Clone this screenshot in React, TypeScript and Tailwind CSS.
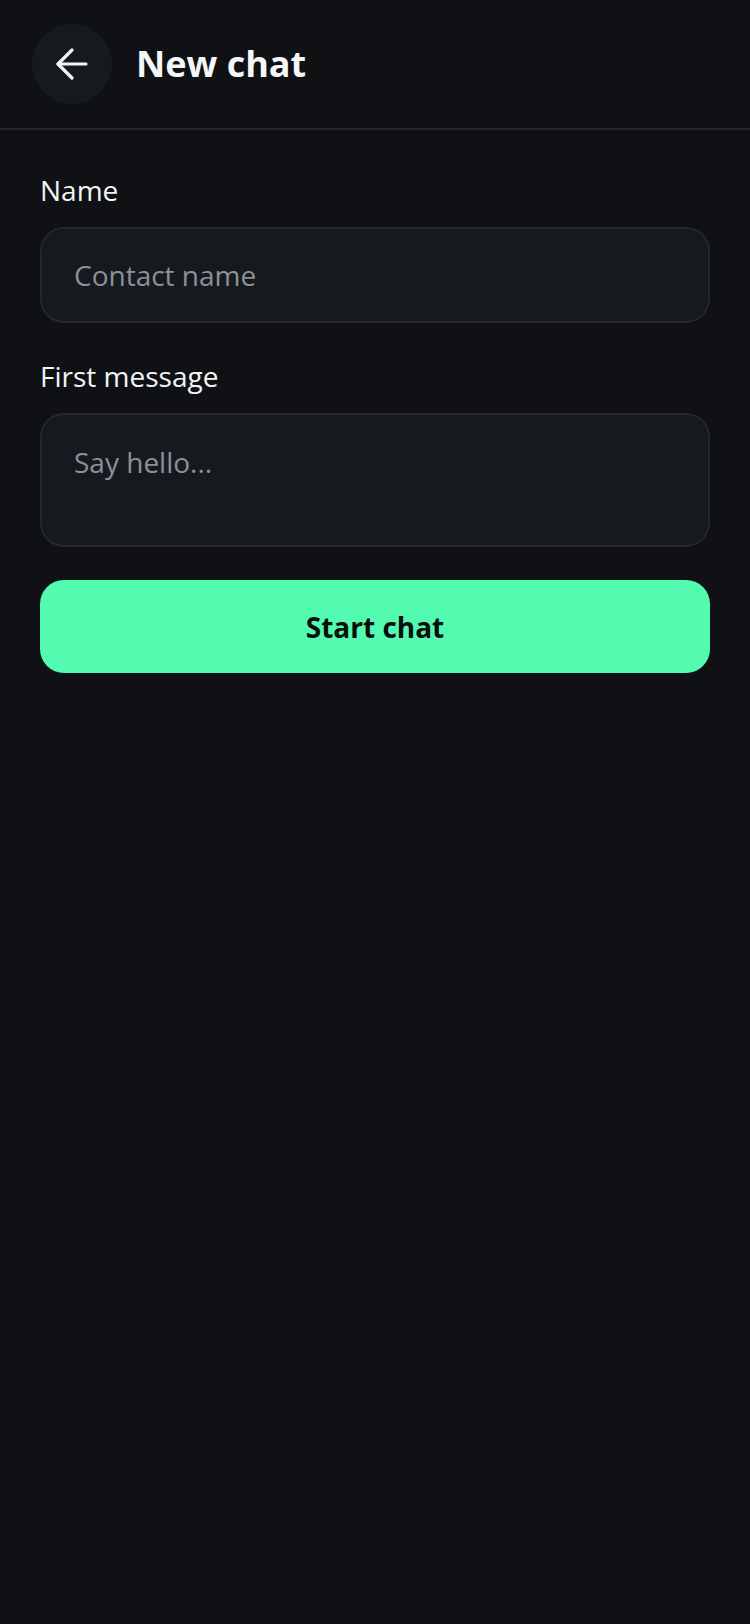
import { ArrowLeft } from "lucide-react";

export default function App() {
  return (
    <div
      className="min-h-[1624px] w-full bg-[#0f1115] text-[#f3f4f6]"
      style={{ fontFamily: '"Open Sans", "Noto Sans", sans-serif' }}
    >
      <header className="flex h-[130px] items-center gap-[24px] border-b-2 border-[#24272c] px-[32px]">
        <button className="flex h-[80px] w-[80px] items-center justify-center rounded-full bg-[#16191e] text-[#f3f4f6]">
          <ArrowLeft size={48} strokeWidth={1.6} />
        </button>
        <h1 className="text-[36px] font-bold leading-none text-[#f5f6f8]">New chat</h1>
      </header>
      <main className="flex flex-col px-[40px] pt-[39px]">
        <label className="text-[28px] leading-[42px]">Name</label>
        <input
          className="mt-[16px] h-[96px] rounded-[24px] border-2 border-[#23272d] bg-[#161a1f] px-[32px] text-[28px] leading-[42px] text-[#f3f4f6] outline-none placeholder:text-[#8b9199]"
          placeholder="Contact name"
        />
        <label className="mt-[32px] text-[28px] leading-[42px]">First message</label>
        <textarea
          className="mt-[16px] h-[134px] resize-none rounded-[24px] border-2 border-[#23272d] bg-[#161a1f] px-[32px] pt-[26px] text-[28px] leading-[42px] text-[#f3f4f6] outline-none placeholder:text-[#8b9199]"
          placeholder="Say hello..."
        />
        <button className="mt-[33px] h-[93px] rounded-[24px] bg-[#52fbb0] text-[28px] font-bold text-[#0a0f0d]">
          Start chat
        </button>
      </main>
    </div>
  );
}
